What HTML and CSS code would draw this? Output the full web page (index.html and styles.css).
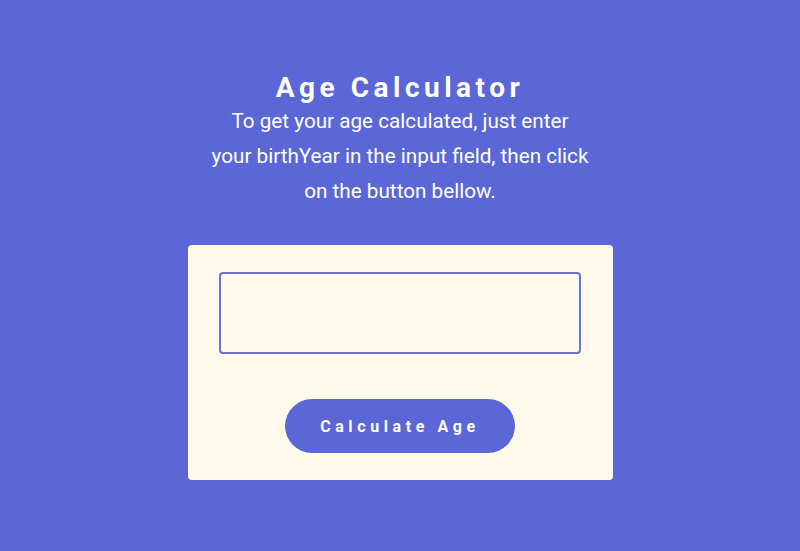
FILE: index.html
```html
<!DOCTYPE html>
<html lang="en">
<head>
  <meta charset="UTF-8">
  <meta name="viewport" content="width=device-width, initial-scale=1.0">
  <title>Age Calculator</title>
  <link rel="stylesheet" href="styles.css">
</head>
<body>
  <div class="header">
    <h1>Age Calculator</h1>
    <p>To get your age calculated, just enter your birthYear in the input field, then click on the button bellow.</p>
  </div>
  <div class="card">
    <input type="text" id="birthYear" class="year-input">
    <button id="calcBtn" class="btn">Calculate Age</button>
  </div>
</body>
</html>
```

FILE: styles.css
```css
* {
  box-sizing: border-box;
}
body {
  margin: 0;
  font-family: 'Roboto', sans-serif;
  background: #5b67d6;
  color: white;
  display: flex;
  flex-direction: column;
  align-items: center;
  min-height: 100vh;
  padding-top: 71px;
}
.header {
  text-align: center;
  width: 381px;
}
.header h1 {
  font-size: 28px;
  font-weight: 700;
  letter-spacing: 4.5px;
  margin: 0;
  line-height: 33px;
}
.header p {
  font-size: 20.7px;
  line-height: 35px;
  margin: 0;
}
.card {
  margin-top: 36px;
  width: 425px;
  height: 235px;
  background: #fffaeb;
  border-radius: 4px;
  padding-top: 27px;
  display: flex;
  flex-direction: column;
  align-items: center;
}
.year-input {
  width: 362px;
  height: 82px;
  border: 2px solid #6a72d2;
  border-radius: 4px;
  background: transparent;
  outline: none;
  font-size: 20px;
  font-family: 'Roboto', sans-serif;
}
.btn {
  margin-top: 45px;
  width: 230px;
  height: 54px;
  border: none;
  border-radius: 27px;
  background: #5b67d6;
  color: white;
  font-family: 'Roboto', sans-serif;
  font-size: 16px;
  font-weight: 700;
  letter-spacing: 4.6px;
  cursor: pointer;
}
```
